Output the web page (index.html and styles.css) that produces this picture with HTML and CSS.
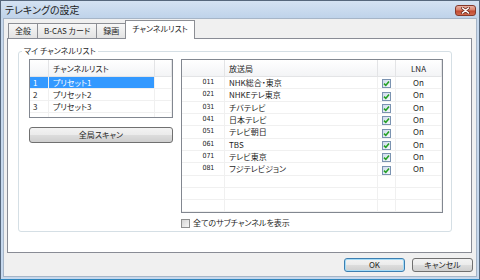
FILE: index.html
```html
<!DOCTYPE html>
<html lang="ja">
<head>
    <meta charset="UTF-8">
    <title>テレキングの設定</title>
    <link rel="stylesheet" href="styles.css">
</head>
<body>
    <div class="window">
        <!-- タイトルバー -->
        <div class="titlebar">
            <span class="title">テレキングの設定</span>
            <button class="close" type="button">
                <svg width="9" height="7" viewBox="0 0 9 7">
                    <path class="x-shadow" d="M1.5 1 L7.5 6 M7.5 1 L1.5 6"/>
                    <path class="x-mark" d="M1.5 1 L7.5 6 M7.5 1 L1.5 6"/>
                </svg>
            </button>
        </div>

        <div class="client">
            <div class="tabs">
                <div class="tab">全般</div>
                <div class="tab">B-CAS カード</div>
                <div class="tab">録画</div>
                <div class="tab tab-active">チャンネルリスト</div>
            </div>

            <div class="panel">
                <fieldset class="group">
                    <legend>マイ チャンネルリスト</legend>
                    <div class="group-body">
                        <!-- プリセット一覧 -->
                        <div class="left-col">
                            <div class="list list-preset">
                                <table>
                                    <colgroup><col class="c-no"><col class="c-preset"><col></colgroup>
                                    <thead>
                                        <tr><th></th><th>チャンネルリスト</th><th></th></tr>
                                    </thead>
                                    <tbody>
                                        <tr class="selected"><td class="no">1</td><td>プリセット1</td><td class="fill"></td></tr>
                                        <tr><td class="no">2</td><td>プリセット2</td><td class="fill"></td></tr>
                                        <tr><td class="no">3</td><td>プリセット3</td><td class="fill"></td></tr>
                                        <tr><td></td><td></td><td></td></tr>
                                    </tbody>
                                </table>
                            </div>
                            <button class="btn btn-wide" type="button">全局スキャン</button>
                        </div>

                        <!-- 放送局一覧 -->
                        <div class="right-col">
                            <div class="list list-station">
                                <table>
                                    <colgroup><col class="c-ch"><col class="c-name"><col class="c-chk"><col></colgroup>
                                    <thead>
                                        <tr><th></th><th>放送局</th><th></th><th class="center">LNA</th></tr>
                                    </thead>
                                    <tbody id="stationBody"></tbody>
                                </table>
                            </div>
                            <label class="check-row">
                                <span class="cb cb-off"></span>全てのサブチャンネルを表示
                            </label>
                        </div>
                    </div>
                </fieldset>
            </div>

            <div class="footer">
                <button class="btn btn-default" type="button">OK</button>
                <button class="btn" type="button">キャンセル</button>
            </div>
        </div>
    </div>

    <script>
        // 放送局の行を作る（空行はグリッド線用）
        var stations = [
            ['011', 'NHK総合・東京'],
            ['021', 'NHKEテレ東京'],
            ['031', 'チバテレビ'],
            ['041', '日本テレビ'],
            ['051', 'テレビ朝日'],
            ['061', 'TBS'],
            ['071', 'テレビ東京'],
            ['081', 'フジテレビジョン']
        ];
        var check = '<span class="cb cb-on"><svg width="7" height="7" viewBox="0 0 7 7"><path d="M1 3.6 L2.8 5.4 L6 1.4"/></svg></span>';
        var html = '';
        for (var i = 0; i < stations.length; i++) {
            html += '<tr><td class="ch">' + stations[i][0] + '</td><td>' + stations[i][1] +
                '</td><td class="center">' + check + '</td><td class="center">On</td></tr>';
        }
        for (var j = 0; j < 4; j++) {
            html += '<tr><td></td><td></td><td></td><td></td></tr>';
        }
        document.getElementById('stationBody').innerHTML = html;
    </script>
</body>
</html>
```

FILE: styles.css
```css
body {
    margin: 0;
    font-family: "Noto Sans CJK JP", sans-serif;
    font-size: 8px;
    font-feature-settings: "palt";
    color: #1e1e1e;
}

/* ウィンドウ枠 */
.window {
    width: 480px;
    height: 280px;
    box-sizing: border-box;
    border: 1px solid #56677c;
    border-bottom-color: #2f86bd;
    background-color: #c6d8ed;
    padding: 0 2px 2px;
    display: flex;
    flex-direction: column;
}

.titlebar {
    height: 17px;
    margin: 0 -2px;
    padding: 0 3px 0 4px;
    display: flex;
    justify-content: space-between;
    background: linear-gradient(#d4e2f2, #bfd3ea);
}

.title {
    font-size: 10px;
    line-height: 18px;
}

.close {
    width: 21px;
    height: 11px;
    margin-top: 4px;
    padding: 0;
    border: 1px solid #84392b;
    border-radius: 3px;
    background: linear-gradient(#eab2a4, #d8806a 45%, #c24a31 55%, #d06a4e);
    display: flex;
    align-items: center;
    justify-content: center;
}

.close path {
    fill: none;
    stroke-linecap: round;
}

.close .x-shadow {
    stroke: #6e2a1f;
    stroke-width: 3;
}

.close .x-mark {
    stroke: #fff;
    stroke-width: 1.6;
}

.client {
    flex: 1;
    background-color: #f0f0f0;
    border: 1px solid #a6b5c7;
    display: flex;
    flex-direction: column;
}

/* タブ */
.tabs {
    height: 19px;
    padding-left: 4px;
    display: flex;
    align-items: flex-end;
}

.tab {
    height: 15px;
    box-sizing: border-box;
    padding: 0 6px;
    line-height: 14px;
    border: 1px solid #8c8e94;
    border-bottom: none;
    margin-right: -1px;
    background: linear-gradient(#f7f7f7, #e3e3e3);
}

.tab-active {
    height: 19px;
    margin-bottom: -1px;
    line-height: 16px;
    background: #fff;
    position: relative;
    z-index: 1;
}

.panel {
    margin-left: 3px;
    width: 465px;
    height: 215px;
    box-sizing: border-box;
    border: 1px solid #898c95;
    background-color: #fff;
    padding: 7px 19px 0 10px;
}

/* グループボックス */
.group {
    margin: 0;
    padding: 3px 8px 3px 10px;
    border: 1px solid #d5dfe5;
    border-radius: 3px;
    min-width: 0;
}

.group legend {
    padding: 0 2px;
    margin-left: -7px;
    line-height: 10px;
}

.group-body {
    display: flex;
    gap: 8px;
}

.left-col {
    width: 144px;
}

.right-col {
    flex: 1;
}

/* リストビュー */
.list {
    box-sizing: border-box;
    border: 1px solid #828790;
    background-color: #fff;
    overflow: hidden;
}

.list-preset {
    height: 59px;
}

.list-station {
    height: 154px;
}

.list table {
    width: 100%;
    table-layout: fixed;
    border-collapse: separate;
    border-spacing: 0;
}

.list th {
    height: 16px;
    padding: 0 0 0 4px;
    font-weight: normal;
    text-align: left;
    line-height: 15px;
    background: linear-gradient(#fff, #f3f4f6);
    border-right: 1px solid #e3e4e6;
    border-bottom: 1px solid #e3e4e6;
    white-space: nowrap;
}

.list td {
    height: 12px;
    box-sizing: border-box;
    padding: 0 0 0 4px;
    line-height: 11px;
    border-right: 1px solid #f0f0f0;
    border-bottom: 1px solid #f0f0f0;
    white-space: nowrap;
}

.list th.center,
.list td.center {
    text-align: center;
    padding-left: 0;
}

.c-no { width: 19px; }
.c-preset { width: 106px; }
.c-ch { width: 43px; }
.c-name { width: 153px; }
.c-chk { width: 18px; }

.list td.no {
    padding-left: 3px;
}

.list td.ch {
    text-align: right;
    padding: 0 10px 0 0;
    font-family: "Liberation Sans Narrow", "DejaVu Sans", sans-serif;
    font-stretch: condensed;
    font-size: 7px;
    letter-spacing: -0.2px;
    color: #222;
}

.list tr.selected td {
    background-color: #3399ff;
    color: #fff;
}

.list tr.selected td.fill {
    background-color: #fff;
}

/* チェックボックス */
.cb {
    display: inline-block;
    width: 9px;
    height: 9px;
    box-sizing: border-box;
    vertical-align: middle;
    line-height: 0;
}

.cb-on {
    border: 1px solid #7b93b1;
    background: linear-gradient(135deg, #cfdcec, #f4f8fc);
}

.cb-on svg path {
    fill: none;
    stroke: #24a024;
    stroke-width: 1.6;
}

.cb-off {
    border: 1px solid #8e8f8f;
    background: linear-gradient(135deg, #d4d4d4, #f6f6f6);
}

.check-row {
    margin-top: 5px;
    height: 10px;
    display: flex;
    align-items: center;
    gap: 3px;
    line-height: 10px;
}

/* ボタン */
.btn {
    height: 16px;
    padding: 0;
    font-family: "Noto Sans CJK JP", sans-serif;
    font-size: 8px;
    font-feature-settings: "palt";
    line-height: 14px;
    color: #1e1e1e;
    border: 1px solid #707070;
    border-radius: 3px;
    background: linear-gradient(#f3f3f3, #ebebeb 49%, #dddddd 50%, #cfcfcf);
}

.btn-wide {
    width: 100%;
    margin-top: 9px;
}

.footer {
    display: flex;
    justify-content: flex-end;
    gap: 7px;
    padding: 5px 3px 0 0;
}

.footer .btn {
    width: 61px;
    height: 14px;
    line-height: 12px;
}

.btn-default {
    border-color: #3c7fb1;
    box-shadow: inset 0 0 0 1px #a6dcf7;
}
```
